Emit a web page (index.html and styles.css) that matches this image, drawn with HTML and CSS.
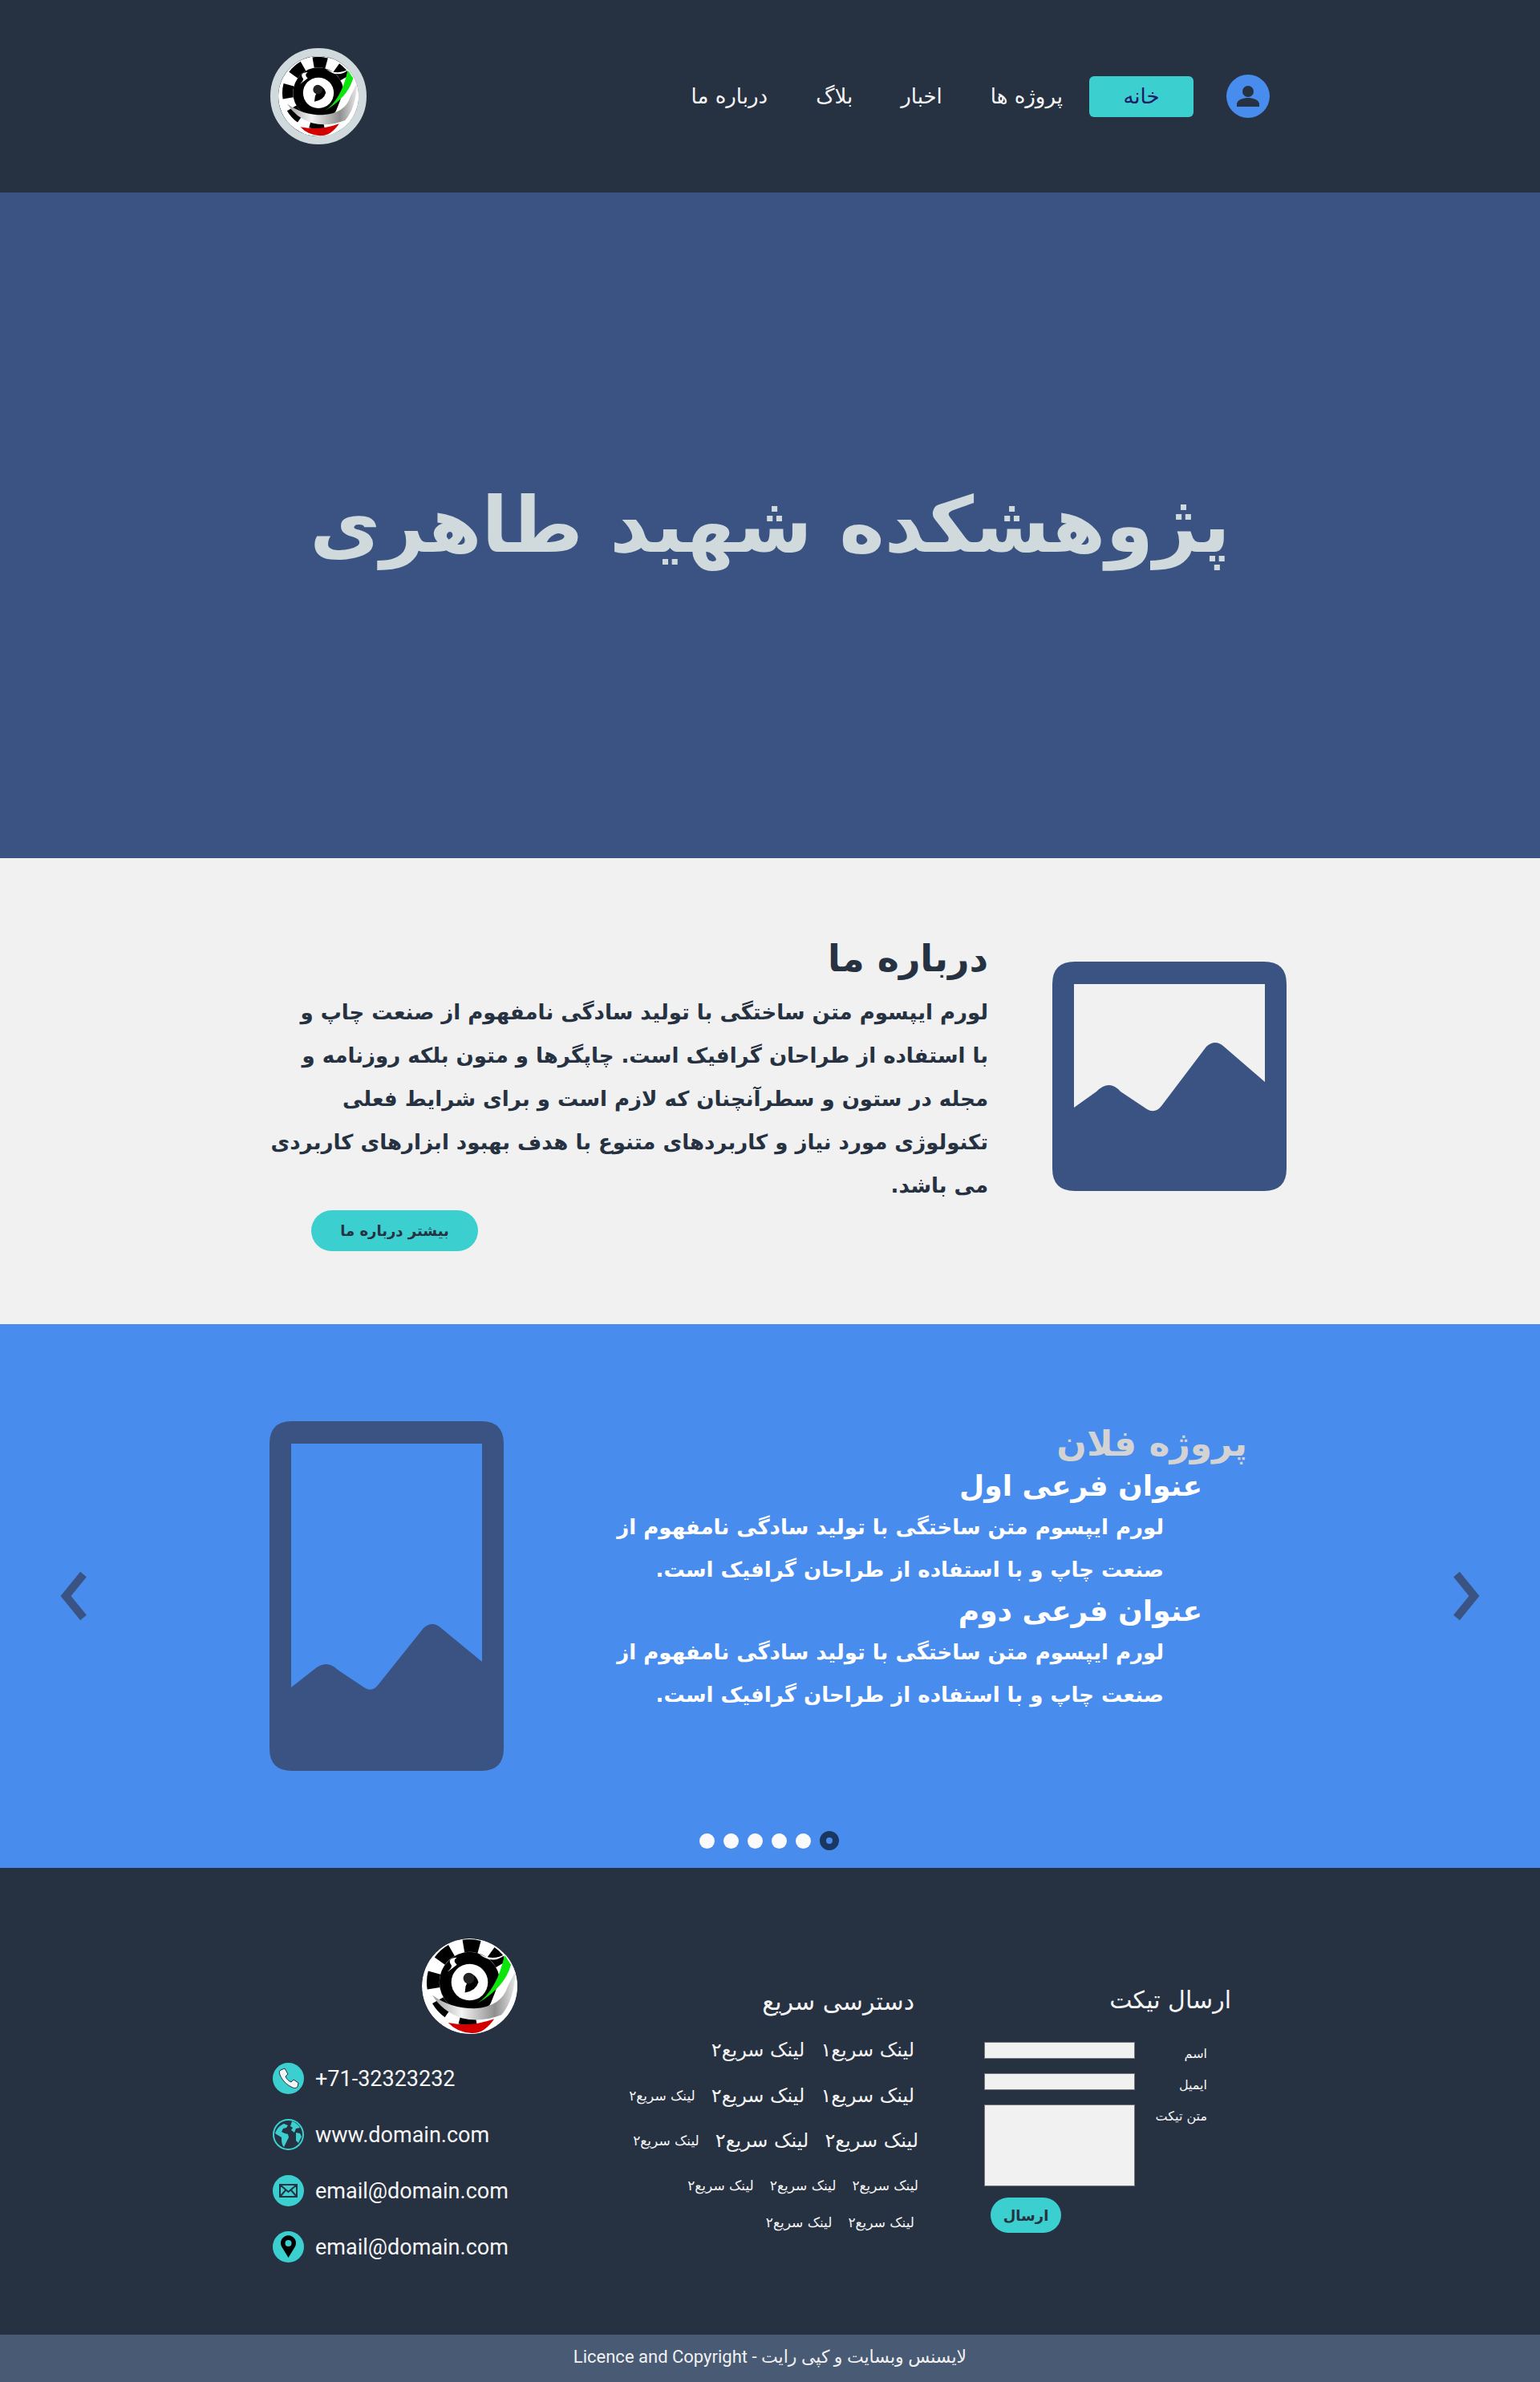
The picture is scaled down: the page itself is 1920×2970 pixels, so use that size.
FILE: index.html
```html
<!DOCTYPE html>
<html lang="fa" dir="rtl">
<head>
<meta charset="utf-8">
<title>پژوهشکده شهید طاهری</title>
<link rel="stylesheet" href="styles.css">
</head>
<body>
<svg class="defs" width="0" height="0" aria-hidden="true">
  <defs>
    <linearGradient id="swoosh" x1="0" y1="0" x2="1" y2="0">
      <stop offset="0" stop-color="#9a9a9a"/>
      <stop offset=".35" stop-color="#f4f4f4"/>
      <stop offset=".75" stop-color="#8f8f8f"/>
      <stop offset="1" stop-color="#e8e8e8"/>
    </linearGradient>
    <clipPath id="logoclip"><circle cx="60" cy="60" r="60"/></clipPath>
    <symbol id="logo" viewBox="0 0 120 120">
      <g clip-path="url(#logoclip)">
        <circle cx="60" cy="60" r="60" fill="#fff"/>
        <circle cx="60" cy="55" r="38" fill="#000"/>
        <circle cx="60" cy="55" r="46" fill="none" stroke="#000" stroke-width="16" stroke-dasharray="20 16.1" stroke-dashoffset="44"/>
        <path d="M70 18 Q88 30 106 19 L120 10 L120 120 L60 120 Q92 90 104 21Q88 34 70 18Z" fill="#fff"/>
        <path d="M104 21 L112 33 Q104 62 69 82 Q94 66 104 21Z" fill="#0be50b"/>
        <circle cx="60" cy="55" r="23" fill="#fff"/>
        <path d="M13 71 Q36 88 66 88 Q100 86 108 60 L118 40 Q116 78 100 96 Q74 106 50 100 Q26 92 13 71Z" fill="url(#swoosh)"/>
        <path d="M33 106 Q60 112 91 101 Q78 120 62 119 Q44 118 33 106Z" fill="#d40000"/>
        <path d="M36 32 Q32 25 44 24 Q38 28 44 33 Q38 38 32 42 Q40 35 36 32Z" fill="#fff"/>
        <path d="M55 60 Q60 48 62 44 Q70 48 71 55 Q68 66 54 68 Z" fill="#000"/>
        <circle cx="59" cy="50" r="7" fill="#222"/>
      </g>
    </symbol>
    <symbol id="imgicon" viewBox="0 0 292 286">
      <path fill-rule="evenodd" d="M28 0H264Q292 0 292 28V258Q292 286 264 286H28Q0 286 0 258V28Q0 0 28 0ZM27 28V182L55 162Q71 146 85 162L118 184Q128 190 136 180L192 106Q203 96 214 106L265 150V28Z"/>
    </symbol>
    <symbol id="imgtall" viewBox="0 0 292 436">
      <path fill-rule="evenodd" d="M28 0H264Q292 0 292 28V408Q292 436 264 436H28Q0 436 0 408V28Q0 0 28 0ZM27 28V332L55 310Q71 296 85 310L118 332Q128 339 136 328L192 258Q203 248 214 258L265 300V28Z"/>
    </symbol>
  </defs>
</svg>

<header class="topbar">
  <nav class="nav">
    <a class="avatar" href="#" aria-label="حساب کاربری">
      <svg viewBox="0 0 54 54" width="54" height="54"><circle cx="27" cy="27" r="27" fill="#488cee"/><circle cx="27" cy="21" r="7" fill="#263142"/><path d="M13 40v-3c0-6 9-8 14-8s14 2 14 8v3z" fill="#263142"/></svg>
    </a>
    <a class="nav-home" href="#">خانه</a>
    <a class="nav-link" href="#">پروژه ها</a>
    <a class="nav-link" href="#">اخبار</a>
    <a class="nav-link" href="#">بلاگ</a>
    <a class="nav-link" href="#">درباره ما</a>
  </nav>
  <div class="toplogo"><svg width="100" height="100"><use href="#logo"/></svg></div>
</header>

<section class="hero"><h1>پژوهشکده شهید طاهری</h1></section>

<section class="about">
  <svg class="about-icon" width="292" height="286"><use href="#imgicon"/></svg>
  <div class="about-text">
    <h2>درباره ما</h2>
    <p>لورم ایپسوم متن ساختگی با تولید سادگی نامفهوم از صنعت چاپ و<br>با استفاده از طراحان گرافیک است. چاپگرها و متون بلکه روزنامه و<br>مجله در ستون و سطرآنچنان که لازم است و برای شرایط فعلی<br>تکنولوژی مورد نیاز و کاربردهای متنوع با هدف بهبود ابزارهای کاربردی<br>می باشد.</p>
    <a class="more" href="#">بیشتر درباره ما</a>
  </div>
</section>

<section class="carousel">
  <svg class="arrow" width="36" height="62" viewBox="0 0 36 62"><path d="M6 4 28 31 6 58" fill="none" stroke="#3a5382" stroke-width="10"/></svg>
  <div class="slide">
    <div class="slide-text">
      <h2>پروژه فلان</h2>
      <h3>عنوان فرعی اول</h3>
      <p>لورم ایپسوم متن ساختگی با تولید سادگی نامفهوم از<br>صنعت چاپ و با استفاده از طراحان گرافیک است.</p>
      <h3>عنوان فرعی دوم</h3>
      <p>لورم ایپسوم متن ساختگی با تولید سادگی نامفهوم از<br>صنعت چاپ و با استفاده از طراحان گرافیک است.</p>
    </div>
    <svg class="slide-icon" width="292" height="436"><use href="#imgtall"/></svg>
  </div>
  <svg class="arrow" width="36" height="62" viewBox="0 0 36 62"><path d="M30 4 8 31 30 58" fill="none" stroke="#3a5382" stroke-width="10"/></svg>
  <div class="dots"><span class="dot active"></span><span class="dot"></span><span class="dot"></span><span class="dot"></span><span class="dot"></span><span class="dot"></span></div>
</section>

<footer class="footer">
  <div class="ticket">
    <h4>ارسال تیکت</h4>
    <div class="ticket-body">
      <div class="ticket-labels"><label>اسم</label><label>ایمیل</label><label>متن تیکت</label></div>
      <div class="ticket-fields">
        <input class="field" type="text">
        <input class="field" type="text">
        <textarea class="field area"></textarea>
        <button class="send" type="button">ارسال</button>
      </div>
    </div>
  </div>
  <div class="quick">
    <h4>دسترسی سریع</h4>
    <div class="qrow r1"><a class="big">لینک سریع۱</a><a class="big">لینک سریع۲</a></div>
    <div class="qrow r2"><a class="big">لینک سریع۱</a><a class="big">لینک سریع۲</a><a class="small">لینک سریع۲</a></div>
    <div class="qrow r3"><a class="big">لینک سریع۲</a><a class="big">لینک سریع۲</a><a class="small">لینک سریع۲</a></div>
    <div class="qrow r4"><a class="small">لینک سریع۲</a><a class="small">لینک سریع۲</a><a class="small">لینک سریع۲</a></div>
    <div class="qrow r5"><a class="small">لینک سریع۲</a><a class="small">لینک سریع۲</a></div>
  </div>
  <div class="contact">
    <svg class="flogo" width="119" height="119"><use href="#logo"/></svg>
    <ul class="clist">
      <li><svg class="cicon" viewBox="0 0 39 39"><circle cx="19.5" cy="19.5" r="19.5" fill="#3ccfcf"/><path d="M10 9l5-2 4 7-3 3c1 3 4 6 7 7l3-3 6 4-1 5c-2 2-5 2-8 0-6-3-11-8-14-15-1-3-1-5 1-6z" fill="#f0f7f7" stroke="#263142" stroke-width="1"/></svg><span>+71-32323232</span></li>
      <li><svg class="cicon" viewBox="0 0 39 39"><circle cx="19.5" cy="19.5" r="19.5" fill="#3ccfcf"/><circle cx="19.5" cy="19.5" r="17.5" fill="#263142"/><path d="M3 18c2-6 6-10 11-12l5 2-2 3-4 1-2 4 4 2 4 1 1 4-4 8-2 4c-3-3-3-8-3-12l-5-3zM24 3c4 1 8 4 10 8l-5 1-2 5-4-3 2-3-3-2zM29 17l5 1 2 4-4 8-3-3z" fill="#3ccfcf"/></svg><span>www.domain.com</span></li>
      <li><svg class="cicon" viewBox="0 0 39 39"><circle cx="19.5" cy="19.5" r="19.5" fill="#3ccfcf"/><path d="M9 12h21v15H9zM9 12l10.500 9L30 12M9 27l7-8M30 27l-7-8" fill="none" stroke="#263142" stroke-width="2"/></svg><span>email@domain.com</span></li>
      <li><svg class="cicon" viewBox="0 0 39 39"><circle cx="19.5" cy="19.5" r="19.500" fill="#3ccfcf"/><path fill-rule="evenodd" d="M19.500 33 11 19a9.500 9.500 0 1 1 17 0zM19.500 11a4 4 0 1 0 0 8 4 4 0 0 0 0-8z" fill="#000"/></svg><span>email@domain.com</span></li>
    </ul>
  </div>
</footer>
<div class="copyright">Licence and Copyright - لایسنس وبسایت و کپی رایت</div>
</body>
</html>
```

FILE: styles.css
```css
* { box-sizing: border-box; }
html, body { margin: 0; padding: 0; }
body { font-family: "DejaVu Sans", "Noto Sans", sans-serif; background: #f1f1f1; color: #263142; width: 1920px; }
a { color: inherit; text-decoration: none; }
h1, h2, h3, h4, p, ul { margin: 0; padding: 0; }
.defs { position: absolute; }

.topbar { height: 240px; background: #263142; display: flex; align-items: center; padding-right: 337px; padding-left: 337px; justify-content: space-between; }
.nav { display: flex; align-items: center; }
.avatar { display: block; width: 54px; height: 55px; margin-left: 41px; }
.nav-home { width: 130px; height: 51px; border-radius: 6px; background: #3ccfcf; color: #1a1a66; font-size: 26px; display: flex; align-items: center; justify-content: center; margin-left: 33px; }
.nav-link { color: #f5f5f5; font-size: 26px; margin-left: 60px; }
.toplogo { width: 120px; height: 120px; border: 10px solid #d0dadd; border-radius: 50%; }
.toplogo svg { display: block; }

.hero { height: 830px; background: #3a5382; display: flex; align-items: center; justify-content: center; }
.hero h1 { font-size: 96px; font-weight: 700; color: #d0dadd; }

.about { height: 581px; background: #f1f1f1; display: flex; align-items: flex-start; padding: 95px 316px 0 0; }
.about-icon { fill: #3a5382; margin-top: 34px; flex: none; }
.about-text { margin-right: 80px; width: 920px; }
.about-text h2 { font-size: 46px; line-height: 60px; }
.about-text p { font-size: 26px; line-height: 54px; font-weight: 700; margin-top: 10px; }
.more { display: flex; width: 208px; height: 51px; border-radius: 26px; background: #3ccfcf; align-items: center; justify-content: center; font-size: 18px; font-weight: 700; margin-right: 636px; margin-top: 4px; }

.carousel { position: relative; height: 678px; background: #488cee; display: flex; justify-content: space-between; padding: 121px 74px 0 74px; }
.arrow { margin-top: 187px; flex: none; }
.slide { display: flex; flex: 1; padding: 0 255px 0 226px; justify-content: space-between; }
.slide-text { color: #fff; }
.slide-text h2 { color: #d3d3d3; font-size: 44px; line-height: 56px; }
.slide-text h3 { font-size: 36px; line-height: 50px; margin-right: 56px; }
.slide-text p { font-size: 26px; line-height: 53px; font-weight: 700; margin-right: 104px; }
.slide-icon { fill: #3a5382; flex: none; }
.dots { position: absolute; bottom: 22px; left: 872px; display: flex; flex-direction: row-reverse; gap: 11px; align-items: center; direction: ltr; }
.dot { width: 19px; height: 19px; border-radius: 50%; background: #fafafa; }
.dot.active { width: 24px; height: 24px; background: #488cee; border: 8px solid #1a3761; }

.footer { height: 582px; background: #263142; display: flex; color: #f5f5f5; position: relative; }
.ticket { width: 385px; margin-right: 385px; padding-top: 140px; }
.ticket h4 { font-size: 30px; font-weight: 500; line-height: 50px; }
.ticket-body { display: flex; margin-top: 27px; }
.ticket-labels { width: 90px; display: flex; flex-direction: column; margin-right: 30px; }
.ticket-labels label { font-size: 16px; height: 39px; line-height: 30px; }
.ticket-fields { width: 188px; margin-right: 0; display: flex; flex-direction: column; }
.field { display: block; width: 188px; height: 21px; margin: 0 0 18px; background: #f1f1f1; border: 1px solid #777; border-radius: 0; padding: 0; }
.area { height: 102px; margin-bottom: 14px; resize: none; }
.send { width: 88px; height: 44px; border-radius: 22px; background: #3ccfcf; border: 0; font: 700 18px "DejaVu Sans", sans-serif; color: #263142; margin-right: 92px; padding: 0; }
.quick { width: 400px; padding-top: 142px; margin-right: 10px; }
.quick h4 { font-size: 30px; font-weight: 500; line-height: 50px; }
.qrow { display: flex; gap: 20px; align-items: center; height: 40px; }
.r1 { margin-top: 15px; }
.r2 { margin-top: 17px; }
.r3 { margin-top: 16px; margin-right: -5px; }
.r4 { margin-top: 16px; margin-right: -5px; }
.r5 { margin-top: 6px; }
.big { font-size: 24px; }
.small { font-size: 17px; }
.contact { width: 340px; margin-right: 60px; padding-top: 88px; display: flex; flex-direction: column; }
.flogo { display: block; margin-right: 35px; }
.clist { list-style: none; direction: ltr; margin-top: 36px; }
.clist li { display: flex; align-items: center; height: 39px; gap: 14px; font-family: Roboto, sans-serif; font-size: 27px; margin-bottom: 31px; }
.cicon { width: 39px; height: 39px; flex: none; }

.copyright { height: 59px; background: #485a74; color: #f1f1f1; font-family: Roboto, "DejaVu Sans", sans-serif; font-size: 22px; text-align: center; line-height: 56px; direction: ltr; }
```
